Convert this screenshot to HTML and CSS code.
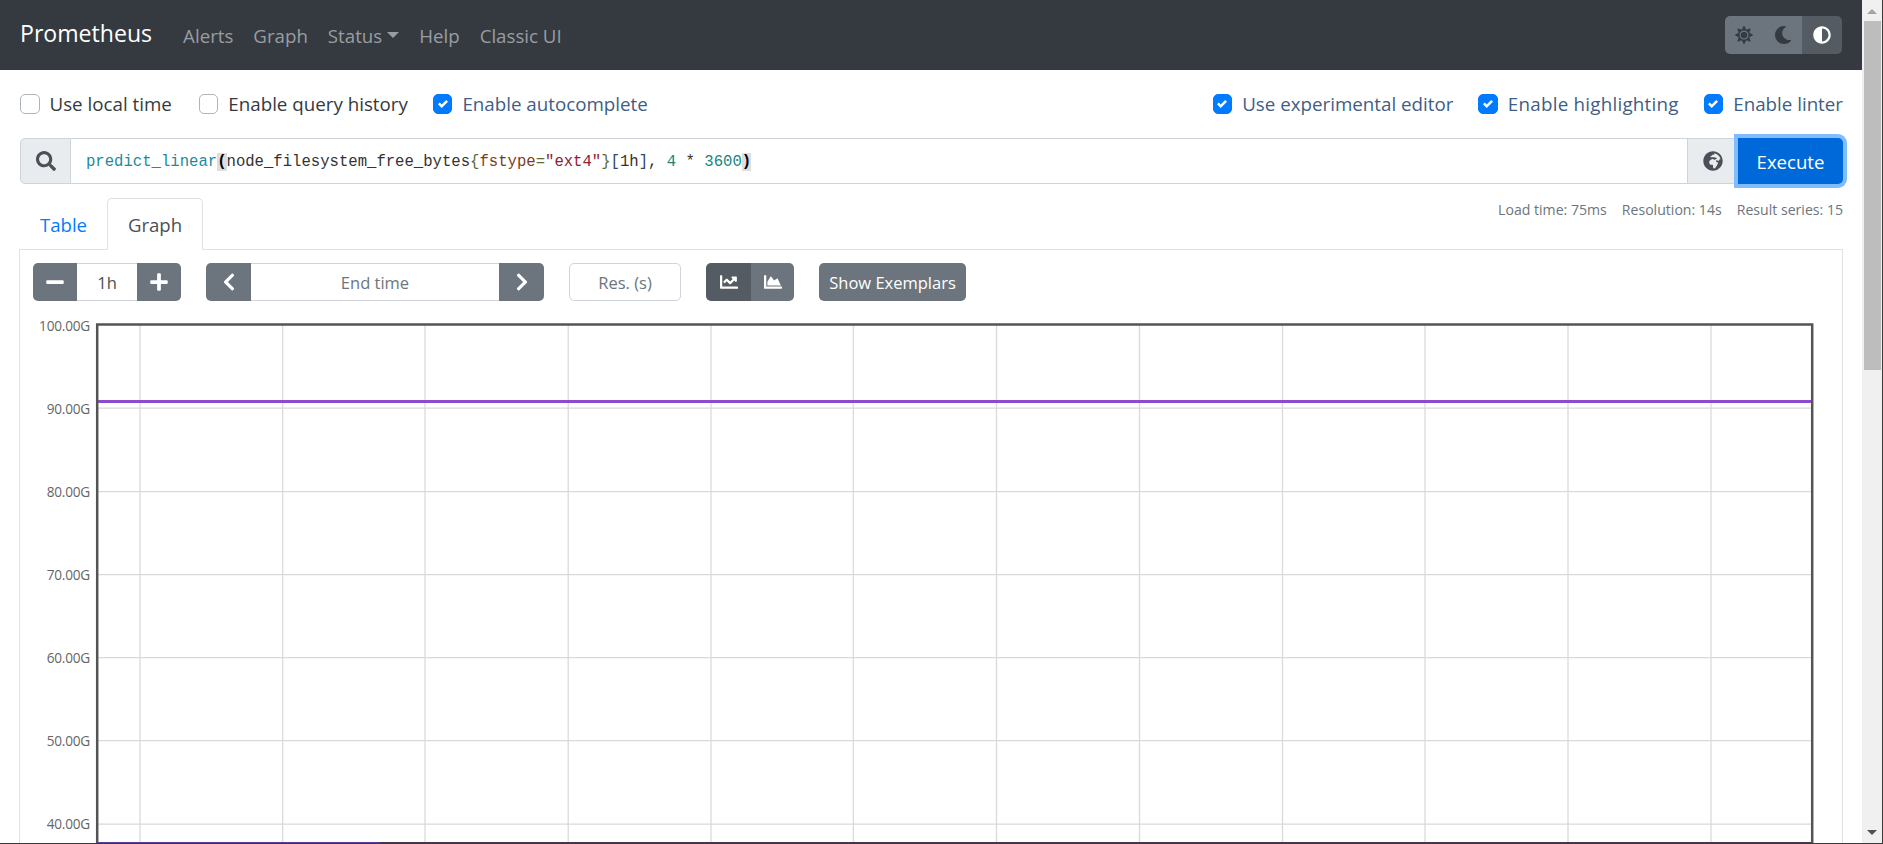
FILE: index.html
```html
<!DOCTYPE html>
<html lang="en">
<head>
<meta charset="utf-8">
<title>Prometheus Time Series Collection and Processing Server</title>
<link rel="stylesheet" href="styles.css">
</head>
<body>
<div class="window">
  <div class="page">
    <nav class="navbar">
      <a class="brand">Prometheus</a>
      <div class="nav-links">
        <a class="nav-link">Alerts</a>
        <a class="nav-link">Graph</a>
        <a class="nav-link">Status<span class="caret"></span></a>
        <a class="nav-link">Help</a>
        <a class="nav-link">Classic UI</a>
      </div>
      <div class="theme-group">
        <button class="theme-btn sun-btn"><svg class="icon-theme" viewBox="0 0 512 512"><path d="M256 160c-52.900 0-96 43.100-96 96s43.100 96 96 96 96-43.100 96-96-43.100-96-96-96zm246.400 80.500l-94.700-47.300 33.500-100.400c4.500-13.600-8.400-26.500-21.900-21.900l-100.400 33.500-47.400-94.800c-6.400-12.800-24.600-12.800-31 0l-47.300 94.700L92.700 70.800c-13.600-4.500-26.500 8.400-21.900 21.900l33.500 100.400-94.700 47.400c-12.800 6.400-12.800 24.600 0 31l94.700 47.300-33.500 100.500c-4.500 13.600 8.400 26.500 21.900 21.900l100.400-33.500 47.300 94.700c6.400 12.800 24.600 12.800 31 0l47.300-94.700 100.400 33.500c13.600 4.500 26.500-8.400 21.900-21.900l-33.500-100.400 94.700-47.300c13-6.500 13-24.700.2-31.100zm-155.900 106c-49.900 49.900-131.100 49.900-181 0-49.900-49.900-49.900-131.100 0-181 49.900-49.900 131.100-49.900 181 0 49.900 49.900 49.900 131.100 0 181z"/></svg></button>
        <button class="theme-btn moon-btn"><svg class="icon-theme" viewBox="0 0 512 512"><path d="M283.211 512c78.962 0 151.079-35.925 198.857-94.792 7.068-8.708-.639-21.430-11.562-19.350-124.203 23.654-238.262-71.576-238.262-196.954 0-72.222 38.662-138.635 101.498-174.394 9.686-5.512 7.250-20.197-3.756-22.230A258.156 258.156 0 0 0 283.211 0c-141.309 0-256 114.511-256 256 0 141.309 114.511 256 256 256z"/></svg></button>
        <button class="theme-btn auto-btn"><svg class="icon-theme" viewBox="0 0 512 512"><path d="M8 256c0 136.966 111.033 248 248 248s248-111.034 248-248S392.966 8 256 8 8 119.033 8 256zm248 184V72c101.705 0 184 82.311 184 184 0 101.705-82.311 184-184 184z"/></svg></button>
      </div>
    </nav>

    <main class="content">
      <div class="options">
        <div class="option-group">
          <label class="option option-first"><span class="box"></span><span class="opt-text">Use local time</span></label>
          <label class="option"><span class="box"></span><span class="opt-text">Enable query history</span></label>
          <label class="option on"><span class="box"><svg class="tick" viewBox="0 0 8 8"><path d="M6.564.750l-3.590 3.612-1.538-1.550L0 4.260 2.974 7.250 8 2.193z"/></svg></span><span class="opt-text">Enable autocomplete</span></label>
        </div>
        <div class="option-group">
          <label class="option on"><span class="box"><svg class="tick" viewBox="0 0 8 8"><path d="M6.564.750l-3.590 3.612-1.538-1.550L0 4.260 2.974 7.250 8 2.193z"/></svg></span><span class="opt-text">Use experimental editor</span></label>
          <label class="option on"><span class="box"><svg class="tick" viewBox="0 0 8 8"><path d="M6.564.750l-3.590 3.612-1.538-1.550L0 4.260 2.974 7.250 8 2.193z"/></svg></span><span class="opt-text opt-wide">Enable highlighting</span></label>
          <label class="option on"><span class="box"><svg class="tick" viewBox="0 0 8 8"><path d="M6.564.750l-3.590 3.612-1.538-1.550L0 4.260 2.974 7.250 8 2.193z"/></svg></span><span class="opt-text">Enable linter</span></label>
        </div>
      </div>

      <div class="query">
        <div class="addon addon-search"><svg class="icon-search" viewBox="0 0 512 512"><path d="M505 442.700L405.300 343c-4.500-4.500-10.600-7-17-7H372c27.600-35.300 44-79.700 44-128C416 93.100 322.900 0 208 0S0 93.100 0 208s93.100 208 208 208c48.300 0 92.700-16.400 128-44v16.300c0 6.400 2.500 12.500 7 17l99.700 99.700c9.400 9.400 24.600 9.400 33.900 0l28.300-28.300c9.400-9.400 9.400-24.600.1-34zM208 336c-70.700 0-128-57.200-128-128 0-70.700 57.200-128 128-128 70.700 0 128 57.200 128 128 0 70.700-57.200 128-128 128z"/></svg></div>
        <div class="editor"><span class="c-fn">predict_linear</span><span class="c-match">(</span><span class="c-metric">node_filesystem_free_bytes</span><span class="c-brace">{</span><span class="c-label">fstype</span><span class="c-brace">=</span><span class="c-str">"ext4"</span><span class="c-brace">}</span><span class="c-dur">[</span><span class="c-metric">1h</span><span class="c-dur">]</span><span class="c-metric">, </span><span class="c-num">4</span><span class="c-metric"> * </span><span class="c-num">3600</span><span class="c-match">)</span></div>
        <div class="addon addon-globe"><svg class="icon-globe" viewBox="0 0 496 512"><path d="M248 8C111.030 8 0 119.030 0 256s111.030 248 248 248 248-111.030 248-248S384.970 8 248 8zm160 215.500v6.930c0 5.870-3.320 11.240-8.570 13.860l-15.390 7.700a15.485 15.485 0 0 1-15.530-.97l-18.210-12.140a15.520 15.520 0 0 0-13.500-1.810l-2.650.88c-9.700 3.230-13.660 14.790-7.990 23.300l13.240 19.860c2.870 4.310 7.710 6.900 12.890 6.900h8.210c8.560 0 15.500 6.940 15.500 15.500v11.340c0 3.350-1.090 6.620-3.100 9.300l-18.740 24.980c-1.420 1.900-2.390 4.100-2.830 6.430l-4.300 22.830c-.62 3.290-2.290 6.290-4.760 8.560a159.608 159.608 0 0 0-25 29.160l-13.030 19.550a27.756 27.756 0 0 1-23.090 12.360c-10.510 0-20.120-5.940-24.820-15.340a78.902 78.902 0 0 1-8.330-35.290V367.500c0-8.560-6.940-15.500-15.500-15.500h-25.880c-14.490 0-28.380-5.760-38.630-16a54.618 54.618 0 0 1-16-38.630v-14.060c0-17.190 8.100-33.380 21.850-43.700l27.580-20.690a54.663 54.663 0 0 1 32.780-10.930h.89c8.480 0 16.850 1.970 24.430 5.770l14.720 7.360c3.680 1.840 7.930 2.140 11.830.84l47.310-15.770c6.330-2.110 10.600-8.030 10.600-14.700 0-8.560-6.940-15.500-15.500-15.500h-10.090c-4.110 0-8.050-1.630-10.960-4.540l-6.920-6.920a15.487 15.487 0 0 0-10.960-4.540H199.500c-8.560 0-15.500-6.940-15.500-15.500v-4.400c0-7.110 4.840-13.310 11.740-15.040l14.450-3.610c3.740-.94 7-3.230 9.140-6.440l8.080-12.110c2.870-4.310 7.710-6.900 12.890-6.900h24.210c8.560 0 15.500-6.940 15.500-15.500v-21.700C359.230 71.630 422.860 131.020 441.930 208H423.500c-8.560 0-15.500 6.940-15.500 15.500z"/></svg></div>
        <button class="execute">Execute</button>
      </div>

      <div class="tabs-row">
        <div class="tabs">
          <a class="tab">Table</a>
          <a class="tab active">Graph</a>
        </div>
        <div class="stats">
          <span>Load time: 75ms</span>
          <span>Resolution: 14s</span>
          <span>Result series: 15</span>
        </div>
      </div>

      <section class="panel">
        <div class="controls">
          <div class="ctl-group">
            <button class="ctl-btn w44"><svg class="icon-sm" viewBox="0 0 448 512"><path d="M416 208H32c-17.670 0-32 14.330-32 32v32c0 17.670 14.330 32 32 32h384c17.670 0 32-14.330 32-32v-32c0-17.670-14.330-32-32-32z"/></svg></button>
            <div class="ctl-input w60 dark">1h</div>
            <button class="ctl-btn w44"><svg class="icon-sm" viewBox="0 0 448 512"><path d="M416 208H272V64c0-17.670-14.330-32-32-32h-32c-17.670 0-32 14.330-32 32v144H32c-17.670 0-32 14.330-32 32v32c0 17.670 14.330 32 32 32h144v144c0 17.670 14.330 32 32 32h32c17.670 0 32-14.330 32-32V304h144c17.670 0 32-14.330 32-32v-32c0-17.670-14.330-32-32-32z"/></svg></button>
          </div>
          <div class="ctl-group">
            <button class="ctl-btn w45"><svg class="icon-sm" viewBox="0 0 320 512"><path d="M34.520 239.030L228.870 44.690c9.370-9.370 24.570-9.370 33.940 0l22.670 22.670c9.360 9.360 9.370 24.520.04 33.900L131.490 256l154.020 154.750c9.340 9.380 9.320 24.540-.04 33.900l-22.670 22.670c-9.370 9.370-24.570 9.370-33.940 0L34.520 272.970c-9.370-9.370-9.370-24.570 0-33.940z"/></svg></button>
            <div class="ctl-input w248">End time</div>
            <button class="ctl-btn w45"><svg class="icon-sm" viewBox="0 0 320 512"><path d="M285.476 272.971L91.132 467.314c-9.373 9.373-24.569 9.373-33.941 0l-22.667-22.667c-9.357-9.357-9.375-24.522-.04-33.901L188.505 256 34.484 101.255c-9.335-9.379-9.317-24.544.04-33.901l22.667-22.667c9.373-9.373 24.569-9.373 33.941 0L285.475 239.030c9.373 9.372 9.373 24.568.001 33.941z"/></svg></button>
          </div>
          <div class="ctl-input res">Res. (s)</div>
          <div class="ctl-group">
            <button class="ctl-btn w45 pressed"><svg class="icon-chart" viewBox="0 0 512 512"><path d="M496 384H64V80c0-8.840-7.160-16-16-16H16C7.160 64 0 71.160 0 80v336c0 17.670 14.330 32 32 32h464c8.840 0 16-7.160 16-16v-32c0-8.840-7.160-16-16-16zM464 96H345.940c-21.380 0-32.090 25.850-16.970 40.970l32.400 32.400L288 242.750l-73.370-73.370c-12.500-12.500-32.760-12.500-45.250 0l-68.690 68.690c-6.250 6.250-6.250 16.380 0 22.630l22.620 22.620c6.250 6.250 16.380 6.250 22.630 0L192 237.250l73.370 73.370c12.500 12.500 32.760 12.500 45.250 0l96-96 32.400 32.400c15.120 15.120 40.970 4.410 40.970-16.970V112c.01-8.840-7.150-16-15.990-16z"/></svg></button>
            <button class="ctl-btn w43"><svg class="icon-chart" viewBox="0 0 512 512"><path d="M500 384c6.600 0 12 5.400 12 12v40c0 6.600-5.400 12-12 12H12c-6.600 0-12-5.400-12-12V76c0-6.600 5.400-12 12-12h40c6.600 0 12 5.400 12 12v308h436zM372.700 159.500L288 216l-85.300-113.700c-5.100-6.800-15.500-6.300-19.900 1L96 248v104h384l-89.900-187.800c-3.200-6.500-11.400-8.700-17.400-4.700z"/></svg></button>
          </div>
          <button class="exemplars">Show Exemplars</button>
        </div>

        <svg class="chart" viewBox="20 311 1822 540">
          <g class="grid">
            <line x1="140" y1="325" x2="140" y2="851"/><line x1="282.700" y1="325" x2="282.700" y2="851"/><line x1="425" y1="325" x2="425" y2="851"/><line x1="568.200" y1="325" x2="568.200" y2="851"/><line x1="711" y1="325" x2="711" y2="851"/><line x1="853.300" y1="325" x2="853.300" y2="851"/><line x1="996.500" y1="325" x2="996.500" y2="851"/><line x1="1139.500" y1="325" x2="1139.500" y2="851"/><line x1="1282.500" y1="325" x2="1282.500" y2="851"/><line x1="1425" y1="325" x2="1425" y2="851"/><line x1="1568" y1="325" x2="1568" y2="851"/><line x1="1711" y1="325" x2="1711" y2="851"/>
            <line x1="98" y1="408" x2="1812" y2="408"/><line x1="98" y1="491.500" x2="1812" y2="491.500"/><line x1="98" y1="574.500" x2="1812" y2="574.500"/><line x1="98" y1="657.500" x2="1812" y2="657.500"/><line x1="98" y1="740.500" x2="1812" y2="740.500"/><line x1="98" y1="824" x2="1812" y2="824"/>
          </g>
          <line class="series" x1="98" y1="401.500" x2="1811" y2="401.500"/>
          <line class="series-low" x1="98" y1="842.500" x2="380" y2="842.500"/>
          <line class="series-mix" x1="380" y1="842.500" x2="1811" y2="842.500"/>
          <rect class="frame" x="97.200" y="324.500" width="1715" height="540"/>
          <g class="ticks">
            <text x="90" y="331">100.00G</text>
            <text x="90" y="414">90.00G</text>
            <text x="90" y="497">80.00G</text>
            <text x="90" y="580">70.00G</text>
            <text x="90" y="663">60.00G</text>
            <text x="90" y="746">50.00G</text>
            <text x="90" y="829">40.00G</text>
          </g>
        </svg>
      </section>
    </main>
  </div>

  <div class="scrollbar">
    <span class="arrow-up"></span>
    <span class="thumb"></span>
    <span class="arrow-down"></span>
  </div>
</div>
</body>
</html>
```

FILE: styles.css
```css
* { box-sizing: border-box; }

html, body {
  margin: 0;
  padding: 0;
  background: #fff;
}

body {
  font-family: "Open Sans", "Noto Sans", sans-serif;
  font-size: 18.75px;
  color: #343a40;
}

button {
  font-family: inherit;
  border: 0;
  padding: 0;
}

.window {
  display: flex;
  width: 1883px;
  height: 844px;
  overflow: hidden;
  border-right: 1px solid #3a3a3a;
  border-bottom: 1px solid #3a3a3a;
}

.page {
  flex: none;
  width: 1862px;
  height: 843px;
  overflow: hidden;
}

/* navbar */
.navbar {
  display: flex;
  align-items: center;
  height: 70px;
  padding: 0 20px;
  background: #343a40;
}

.brand {
  color: #fff;
  font-size: 23.1px;
  line-height: 1;
  margin-top: -3px;
}

.nav-links {
  display: flex;
  gap: 20px;
  margin-left: 31px;
  font-size: 18.7px;
  color: #9a9da0;
}

.nav-link {
  display: flex;
  align-items: center;
}

.caret {
  width: 0;
  height: 0;
  margin-left: 5px;
  border-top: 6px solid #9a9da0;
  border-left: 6px solid transparent;
  border-right: 6px solid transparent;
}

.theme-group {
  display: flex;
  margin-left: auto;
  height: 38px;
  border-radius: 5px;
  overflow: hidden;
}

.theme-btn {
  display: flex;
  align-items: center;
  justify-content: center;
  background: #6c757d;
  color: #343a40;
}

.sun-btn { width: 38px; }
.moon-btn { width: 39px; }
.auto-btn { width: 40px; background: #545b62; color: #fff; }

.icon-theme {
  width: 18px;
  height: 18px;
  fill: currentColor;
}

/* content */
.content {
  padding: 0 19px 0 20px;
}

.options {
  display: flex;
  justify-content: space-between;
  align-items: center;
  height: 46px;
  margin-top: 11px;
  margin-bottom: 11px;
}

.option-group {
  display: flex;
  gap: 25px;
}

.option-first {
  margin-right: 2px;
}

.option {
  display: flex;
  align-items: center;
  gap: 10px;
  line-height: 26px;
}

.box {
  display: flex;
  align-items: center;
  justify-content: center;
  width: 19.5px;
  height: 19.5px;
  background: #fff;
  border: 1px solid #adb5bd;
  border-radius: 5px;
}

.option.on .box {
  background: #007bff;
  border-color: #007bff;
}

.option.on .opt-text {
  color: #3f5d85;
}

.opt-wide {
  letter-spacing: .25px;
}

.tick {
  width: 10px;
  height: 10px;
  fill: #fff;
}

/* query */
.query {
  display: flex;
  height: 46px;
}

.addon {
  display: flex;
  align-items: center;
  justify-content: center;
  background: #e9ecef;
  border: 1px solid #ced4da;
}

.addon-search {
  width: 51px;
  border-radius: 5px 0 0 5px;
  color: #495057;
}

.addon-globe {
  width: 51px;
  border-left: 1px solid #ced4da;
  border-right: 0;
  color: #495057;
}

.icon-search, .icon-globe {
  fill: currentColor;
  width: 20px;
  height: 20px;
}

.editor {
  flex: 1;
  display: flex;
  align-items: center;
  padding: 2px 0 0 15px;
  border-top: 1px solid #ced4da;
  border-bottom: 1px solid #ced4da;
  font-family: "Liberation Mono", "DejaVu Sans Mono", monospace;
  font-size: 15.62px;
  white-space: pre;
}

.c-fn { color: #1f8a9c; }
.c-metric { color: #333; }
.c-brace { color: #5d6b3a; }
.c-label { color: #7d3b1c; }
.c-str { color: #8c2232; }
.c-dur { color: #2c4a6a; }
.c-num { color: #17877f; }
.c-match { background: #dedede; color: #000; font-weight: 700; }

.execute {
  position: relative;
  width: 105px;
  margin-left: 0;
  color: #fff;
  background: #0069d9;
  border-radius: 0 5px 5px 0;
  box-shadow: 0 0 0 4px #80bdff;
  font-size: 18.6px;
}

/* tabs */
.tabs-row {
  display: flex;
  justify-content: space-between;
  align-items: flex-start;
  margin-top: 14px;
  height: 51px;
}

.tabs {
  display: flex;
  height: 52px;
  position: relative;
  z-index: 1;
}

.tab {
  display: flex;
  align-items: center;
  justify-content: center;
  height: 52px;
  font-size: 18.6px;
  color: #007bff;
  border: 1px solid transparent;
  border-radius: 5px 5px 0 0;
  width: 87px;
}

.tab.active {
  width: 96px;
  color: #495057;
  background: #fff;
  border-color: #dee2e6 #dee2e6 #fff;
}

.stats {
  display: flex;
  gap: 15px;
  color: #6c757d;
  font-size: 14.1px;
  line-height: 24px;
}

/* panel */
.panel {
  margin-left: -1px;
  border: 1px solid #dee2e6;
  height: 640px;
}

.controls {
  display: flex;
  gap: 25px;
  padding: 13px 0 0 13px;
  color: #6c757d;
}

.ctl-group {
  display: flex;
  height: 38px;
  border-radius: 5px;
  overflow: hidden;
}

.ctl-btn {
  display: flex;
  align-items: center;
  justify-content: center;
  height: 38px;
  background: #6c757d;
  color: #fff;
}

.ctl-btn.pressed { background: #545b62; }

.w43 { width: 43px; }
.w44 { width: 44px; }
.w45 { width: 45px; }
.w60 { width: 60px; }
.w248 { width: 248px; }

.ctl-input {
  display: flex;
  align-items: center;
  justify-content: center;
  height: 38px;
  font-size: 16.5px;
  background: #fff;
  border-top: 1px solid #ced4da;
  border-bottom: 1px solid #ced4da;
}

.ctl-input.dark { color: #495057; }

.ctl-input.res {
  width: 112px;
  border: 1px solid #ced4da;
  border-radius: 5px;
}

.icon-sm {
  height: 20px;
  width: 18px;
  fill: currentColor;
}

.icon-chart {
  width: 18px;
  height: 18px;
  fill: currentColor;
}

.exemplars {
  width: 147px;
  height: 38px;
  color: #fff;
  background: #6c757d;
  border-radius: 5px;
  font-size: 16.5px;
}

/* chart */
.chart {
  display: block;
  width: 1822px;
  height: 540px;
  margin-top: 10px;
}

.grid line {
  stroke: #d9d9d9;
  stroke-width: 1.25;
}

.series {
  stroke: #8c4bcf;
  stroke-width: 3;
}

.series-low {
  stroke: #5b3aa0;
  stroke-width: 1;
}

.series-mix {
  stroke: #4a3550;
  stroke-width: 1;
}

.frame {
  fill: none;
  stroke: #545454;
  stroke-width: 2.5;
}

.ticks text {
  fill: #666;
  font-size: 13.6px;
  letter-spacing: -.2px;
  text-anchor: end;
}

/* fake window scrollbar */
.scrollbar {
  position: relative;
  flex: none;
  width: 20px;
  height: 843px;
  background: #f0f0f0;
}

.thumb {
  position: absolute;
  left: 2px;
  top: 21px;
  width: 17px;
  height: 349px;
  background: #bdbdbd;
}

.arrow-up, .arrow-down {
  position: absolute;
  left: 5px;
  width: 0;
  height: 0;
  border-left: 5px solid transparent;
  border-right: 5px solid transparent;
}

.arrow-up {
  top: 9px;
  border-bottom: 5px solid #a3a3a3;
}

.arrow-down {
  top: 830px;
  border-top: 5px solid #505050;
}
```
